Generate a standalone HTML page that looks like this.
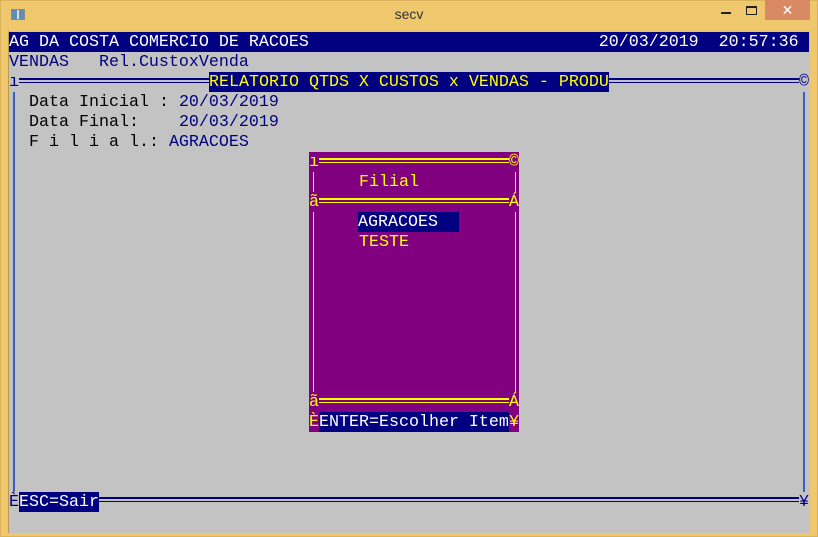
<!DOCTYPE html>
<html><head><meta charset="utf-8"><style>
*{margin:0;padding:0;box-sizing:border-box}
body{width:818px;height:537px;background:#efc76c;position:relative;overflow:hidden;font-family:"Liberation Mono",monospace;font-size:16.67px;line-height:20px}
.t{position:absolute;white-space:pre;height:20px;padding-top:1px}
.dl{position:absolute;height:5px;border-top:2px solid;border-bottom:1px solid}
.v{position:absolute;width:2px}
</style></head><body>
<div style="position:absolute;left:0;top:0;width:818px;height:537px;border:1px solid #d9b25a"></div>
<div style="position:absolute;left:11px;top:9px;width:14px;height:11px;border:1px solid #8a8a8a;background:linear-gradient(90deg,#5f8fb8 0 40%,#ddd 40% 60%,#5f8fb8 60%)"></div>
<div class="t" style="left:0;width:818px;top:3px;text-align:center;font-family:'Liberation Sans',sans-serif;font-size:14px;color:#333">secv</div>
<div style="position:absolute;left:721px;top:12px;width:10px;height:2px;background:#222"></div>
<div style="position:absolute;left:746px;top:6px;width:11px;height:9px;border:1px solid #222;border-top-width:2px"></div>
<div style="position:absolute;left:765px;top:0;width:45px;height:20px;background:#d98a62;color:#fff;font-family:'Liberation Sans',sans-serif;font-size:14px;text-align:center;line-height:20px">✕</div>
<div style="position:absolute;left:8px;top:31px;width:802px;height:502px;background:#c3c3c3;border-left:1px solid #b89a50"></div>
<div class="t" style="left:9px;top:32px;width:800px;background:#000080;color:#fff">AG DA COSTA COMERCIO DE RACOES                             20/03/2019  20:57:36</div>
<div class="t" style="left:9px;top:52px;color:#000080">VENDAS   Rel.CustoxVenda</div>
<div class="t" style="left:9px;top:72px;color:#000080">ı</div>
<div class="dl" style="left:19px;top:78px;width:190px;color:#000080"></div>
<div class="t" style="left:209px;top:72px;width:400px;background:#000080;color:#ffff00">RELATORIO QTDS X CUSTOS x VENDAS - PRODU</div>
<div class="dl" style="left:609px;top:78px;width:190px;color:#000080"></div>
<div class="t" style="left:799px;top:72px;color:#000080">©</div>
<div class="v" style="left:13px;top:92px;height:400px;background:#3a5fc0"></div>
<div class="v" style="left:803px;top:92px;height:400px;background:#3a5fc0"></div>
<div class="t" style="left:29px;top:92px;color:#000">Data Inicial : <span style="color:#000080">20/03/2019</span></div>
<div class="t" style="left:29px;top:112px;color:#000">Data Final:    <span style="color:#000080">20/03/2019</span></div>
<div class="t" style="left:29px;top:132px;color:#000">F i l i a l.: <span style="color:#000080">AGRACOES</span></div>
<div class="t" style="left:9px;top:492px;color:#000080">È</div>
<div class="t" style="left:19px;top:492px;width:80px;background:#000080;color:#fff">ESC=Sair</div>
<div class="dl" style="left:99px;top:497px;width:700px;color:#000080"></div>
<div class="t" style="left:799px;top:492px;color:#000080">¥</div>
<div style="position:absolute;left:309px;top:152px;width:210px;height:280px;background:#800080"></div>
<div class="t" style="left:309px;top:152px;color:#ffff00">ı</div>
<div class="dl" style="left:319px;top:158px;width:190px;color:#ffff00"></div>
<div class="t" style="left:509px;top:152px;color:#ffff00">©</div>
<div class="v" style="left:313px;top:172px;height:20px;background:#ffff00;width:1px"></div>
<div class="v" style="left:515px;top:172px;height:20px;background:#ffff00;width:1px"></div>
<div class="t" style="left:359px;top:172px;color:#ffff00">Filial</div>
<div class="t" style="left:309px;top:192px;color:#ffff00">ã</div>
<div class="dl" style="left:319px;top:198px;width:190px;color:#ffff00"></div>
<div class="t" style="left:509px;top:192px;color:#ffff00">Á</div>
<div class="v" style="left:313px;top:212px;height:180px;background:#ffff00;width:1px"></div>
<div class="v" style="left:515px;top:212px;height:180px;background:#ffff00;width:1px"></div>
<div class="t" style="left:358px;top:212px;width:101px;background:#000080;color:#fff">AGRACOES</div>
<div class="t" style="left:359px;top:232px;color:#ffff00">TESTE</div>
<div class="t" style="left:309px;top:392px;color:#ffff00">ã</div>
<div class="dl" style="left:319px;top:398px;width:190px;color:#ffff00"></div>
<div class="t" style="left:509px;top:392px;color:#ffff00">Á</div>
<div class="t" style="left:309px;top:412px;color:#ffff00">È</div>
<div class="t" style="left:319px;top:412px;width:190px;background:#000080;color:#fff">ENTER=Escolher Item</div>
<div class="t" style="left:509px;top:412px;color:#ffff00">¥</div>
</body></html>
